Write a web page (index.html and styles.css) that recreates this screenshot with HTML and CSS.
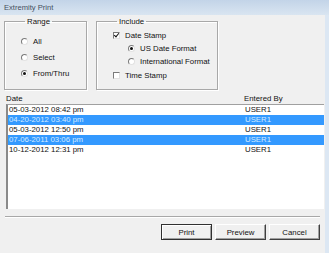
FILE: index.html
```html
<!DOCTYPE html>
<html lang="en">
<head>
    <meta charset="UTF-8">
    <title>Extremity Print</title>
    <link rel="stylesheet" href="styles.css">
</head>
<body>
<div class="window">
    <div class="titlebar">Extremity Print</div>

    <div class="client">
        <div class="groups">
            <fieldset class="group range">
                <legend>Range</legend>
                <label class="opt"><span class="radio"></span>All</label>
                <label class="opt"><span class="radio"></span>Select</label>
                <label class="opt"><span class="radio on"></span>From/Thru</label>
            </fieldset>

            <fieldset class="group include">
                <legend>Include</legend>
                <label class="opt"><span class="check on"></span>Date Stamp</label>
                <label class="opt sub"><span class="radio on"></span>US Date Format</label>
                <label class="opt sub"><span class="radio"></span>International Format</label>
                <label class="opt last"><span class="check"></span>Time Stamp</label>
            </fieldset>
        </div>

        <div class="list-head">
            <span>Date</span>
            <span>Entered By</span>
        </div>
        <div class="listbox">
            <div class="row"><span>05-03-2012 08:42 pm</span><span>USER1</span></div>
            <div class="row sel"><span>04-20-2012 03:40 pm</span><span>USER1</span></div>
            <div class="row"><span>05-03-2012 12:50 pm</span><span>USER1</span></div>
            <div class="row sel"><span>07-06-2011 03:06 pm</span><span>USER1</span></div>
            <div class="row"><span>10-12-2012 12:31 pm</span><span>USER1</span></div>
        </div>

        <div class="separator"></div>

        <div class="buttons">
            <button class="btn default">Print</button>
            <button class="btn">Preview</button>
            <button class="btn">Cancel</button>
        </div>
    </div>
</div>
</body>
</html>
```

FILE: styles.css
```css
body { margin: 0; width: 329px; height: 253px; overflow: hidden; background: #f0f0f0; font-family: "Liberation Sans", Arial, sans-serif; font-size: 7.8px; color: #111; }
.window { display: flex; flex-direction: column; height: 253px; }
.titlebar { height: 15px; line-height: 15px; padding-left: 4px; background: linear-gradient(#c3d4e8, #d9e5f1); color: #44505e; font-size: 7.6px; }
.client { flex: 1; display: flex; flex-direction: column; padding: 0 5px 0 4px; border-right: 4px solid #dce7f3; border-left: 1px solid #f0f0f0; }

.groups { display: flex; gap: 9px; margin-top: 2px; }
.group { box-sizing: border-box; margin: 0; height: 73px; padding: 0 0 0 16px; border: 1px solid #a8a8a8; box-shadow: inset 1px 1px 0 #fff, 1px 1px 0 #fff; }
.group legend { padding: 0 2px; margin-left: 4px; line-height: 9px; }
.range { width: 83px; padding-top: 7px; margin-left: -1px; }
.include { width: 122px; padding-top: 3px; }

.opt { display: flex; align-items: center; gap: 5px; height: 13px; }
.range .opt { height: 16px; }
.opt.sub { margin-left: 15px; }
.opt.last { margin-top: 1px; }

.radio { box-sizing: border-box; width: 7px; height: 7px; border-radius: 50%; background: #fff; border: 1px solid; border-color: #7a7a7a #e2e2e2 #e2e2e2 #7a7a7a; display: flex; align-items: center; justify-content: center; }
.radio.on::after { content: ""; width: 3px; height: 3px; border-radius: 50%; background: #111; }
.check { box-sizing: border-box; width: 7px; height: 7px; background: #fff; border: 1px solid; border-color: #7a7a7a #e2e2e2 #e2e2e2 #7a7a7a; position: relative; }
.check.on::after { content: ""; position: absolute; left: 1px; top: -1px; width: 2px; height: 4px; border: solid #111; border-width: 0 1.5px 1.5px 0; transform: rotate(40deg); }

.list-head { display: grid; grid-template-columns: 238px 1fr; margin-top: 4px; padding-left: 1px; line-height: 10px; height: 10px; }
.listbox { box-sizing: border-box; margin-left: 1px; width: 318px; height: 105px; background: #fff; border-top: 1px solid #a0a0a0; border-left: 2px solid #8a8a8a; padding-top: 0; }
.row { display: grid; grid-template-columns: 236px 1fr; height: 10px; line-height: 10px; padding-left: 1px; }
.row.sel { background: #3399ff; color: #d6ebff; }

.separator { margin-top: 7px; border-top: 1px solid #a8a8a8; border-bottom: 1px solid #fff; }

.buttons { display: flex; justify-content: flex-end; gap: 3px; margin-top: 6px; }
.btn { box-sizing: border-box; width: 51px; height: 16px; padding: 0; font: inherit; color: #111; background: #f0f0f0; border: 1px solid; border-color: #fff #404040 #404040 #fff; box-shadow: inset -1px -1px 0 #a0a0a0; }
.btn.default { border-color: #303030; box-shadow: inset 1px 1px 0 #fff, inset -1px -1px 0 #a0a0a0; }
```
